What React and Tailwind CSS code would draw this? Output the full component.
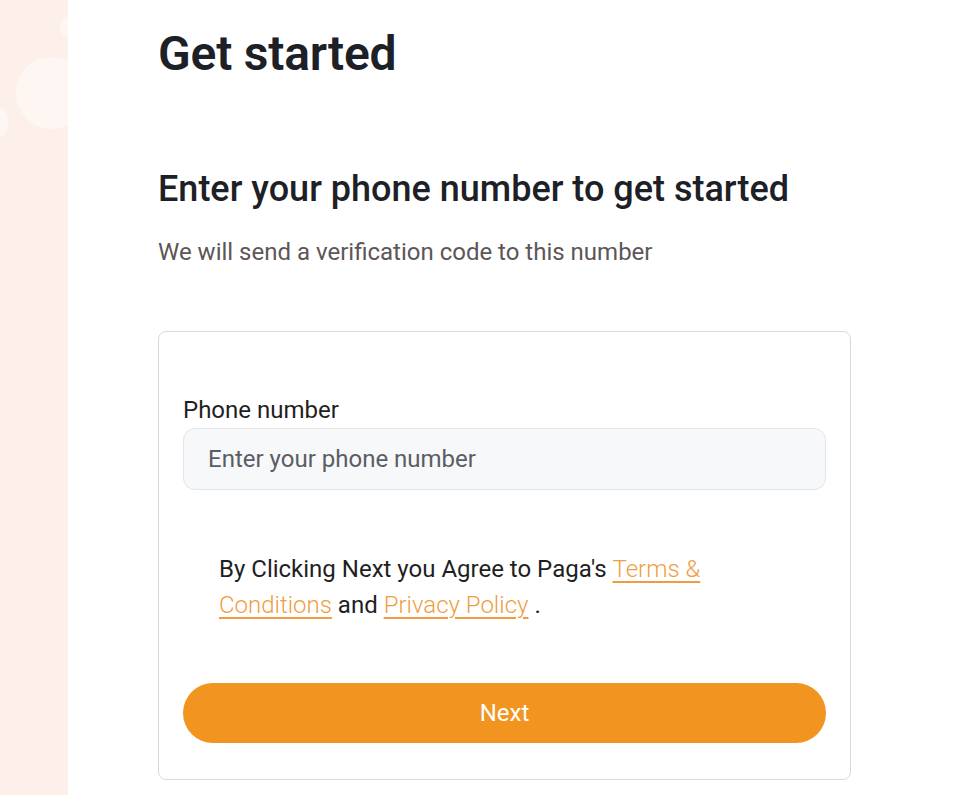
export default function App() {
  return (
    <div
      className="flex min-h-[795px] bg-white"
      style={{ fontFamily: 'Roboto, "Liberation Sans", sans-serif' }}
    >
      {/* left decorative strip */}
      <div className="relative w-[68px] shrink-0 overflow-hidden bg-[#fdf0eb]">
        <div className="absolute left-[16px] top-[57px] h-[72px] w-[72px] rounded-full bg-[#fef6f2]" />
        <div className="absolute left-[60px] top-[16px] h-[22px] w-[22px] rounded-full bg-[#fef6f2]" />
        <div className="absolute left-[-18px] top-[106px] h-[32px] w-[26px] rounded-full bg-[#fef6f2]" />
      </div>

      {/* main */}
      <div className="flex-1 pl-[90px] pr-[125px] pt-[25px]">
        <h1 className="text-[48px] font-semibold leading-[58px] tracking-[-0.2px] text-[#1d2127]">
          Get started
        </h1>

        <h2 className="mt-[84px] text-[36px] font-medium leading-[44px] text-[#1d2127]">
          Enter your phone number to get started
        </h2>
        <p className="mt-[25px] text-[24px] leading-[32px] text-[#5c5657]">
          We will send a verification code to this number
        </p>

        <div className="mt-[63px] rounded-[8px] border border-[#d9d9d9] px-[24px] pb-[36px] pt-[62px]">
          <label className="block text-[24px] leading-[32px] text-[#1f1f1f]">Phone number</label>
          <input
            type="text"
            placeholder="Enter your phone number"
            className="mt-[2px] h-[62px] w-full rounded-[12px] border border-[#e2e4e8] bg-[#f7f8fa] px-[24px] text-[24px] text-[#1f1f1f] placeholder:text-[#5a5d63] outline-none"
          />

          <p className="mt-[61px] px-[36px] text-[24px] leading-[36px] text-[#1f1f1f]">
            By Clicking Next you Agree to Paga's{' '}
            <a href="#" className="font-light text-[#ef9d43] underline decoration-[2px] underline-offset-[4px]">
              Terms &amp; Conditions
            </a>{' '}
            and{' '}
            <a href="#" className="font-light text-[#ef9d43] underline decoration-[2px] underline-offset-[4px]">
              Privacy Policy
            </a>{' '}
            .
          </p>

          <button className="mt-[60px] h-[60px] w-full rounded-full bg-[#f29420] text-[24px] font-normal text-white">
            Next
          </button>
        </div>
      </div>
    </div>
  );
}
